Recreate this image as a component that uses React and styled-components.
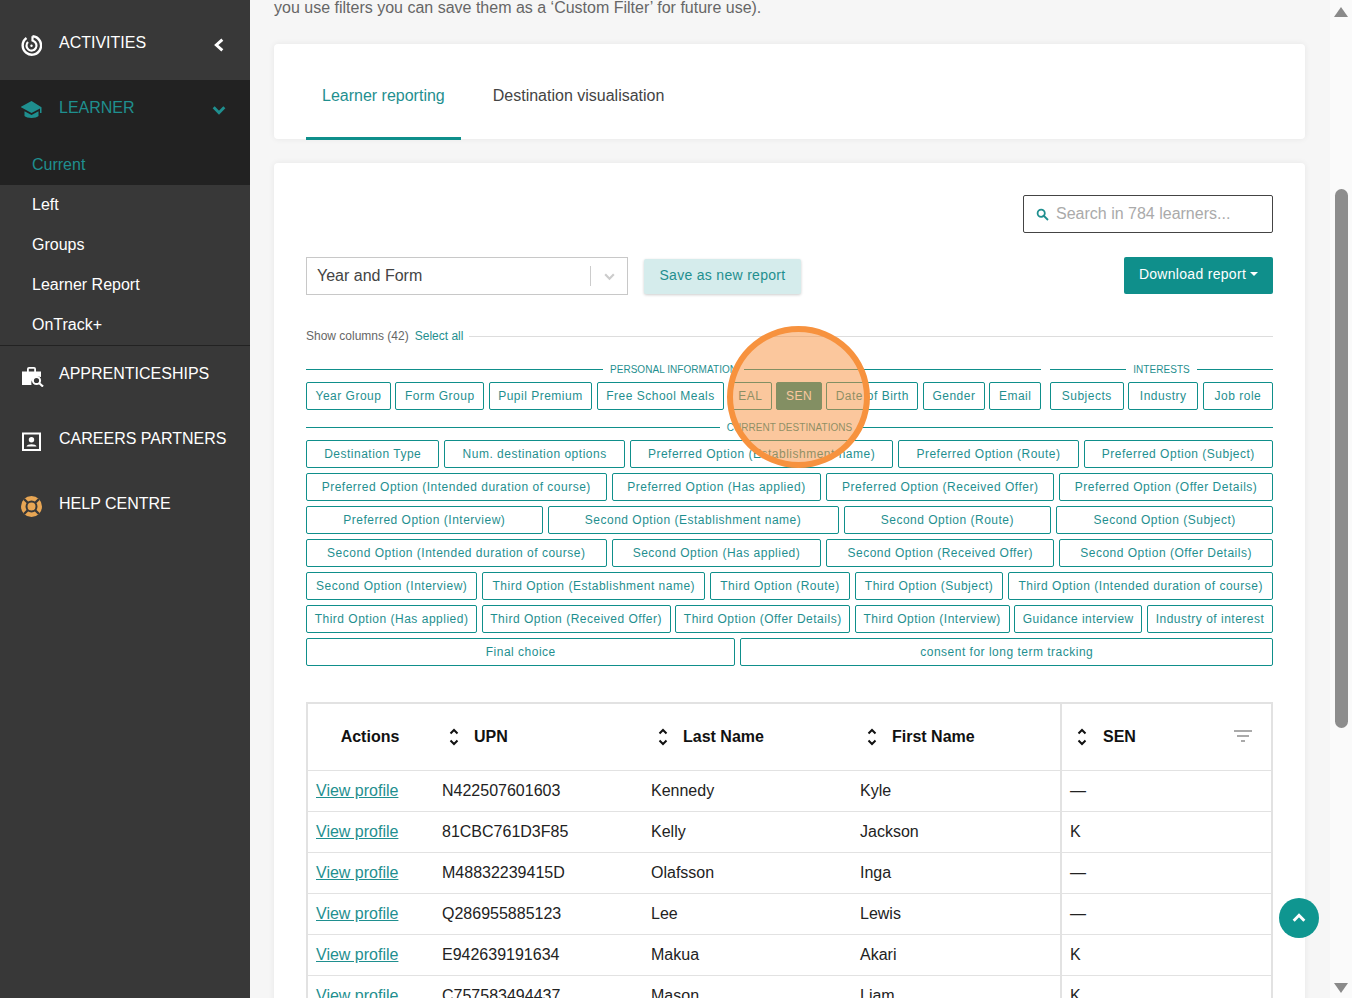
import React from 'react';
import styled, { createGlobalStyle } from 'styled-components';

const teal = '#0f8f8b';
const tealText = '#1f8f8f';

const GlobalStyle = createGlobalStyle`
  html, body {
    margin: 0;
    padding: 0;
    height: 100%;
    overflow: hidden;
  }
  body {
    font-family: 'Liberation Sans', Arial, sans-serif;
    color: #222;
  }
  * {
    box-sizing: border-box;
  }
`;

const Page = styled.div`
  position: relative;
  display: flex;
  width: 1352px;
  height: 998px;
  overflow: hidden;
`;

const Sidebar = styled.aside`
  flex: 0 0 250px;
  background: #383838;
  padding-top: 15px;
`;

const NavItem = styled.div`
  display: flex;
  align-items: flex-start;
  height: 65px;
  padding: 18px 0 0 21px;
  color: ${(p) => (p.$active ? tealText : '#fff')};
`;

const NavIcon = styled.span`
  flex: 0 0 21px;
  min-width: 0;
  height: 21px;
  margin-top: 2px;
  margin-right: 17px;
  svg {
    display: block;
  }
`;

const NavLabel = styled.span`
  flex: 1;
  font-size: 16px;
  line-height: 20px;
`;

const NavChevron = styled.span`
  flex: 0 0 39px;
  margin-top: 4px;
  svg {
    display: block;
  }
`;

const ActiveGroup = styled.div`
  background: #222;
  height: 105px;
`;

const CurrentLink = styled.div`
  padding-left: 32px;
  margin-top: 10px;
  line-height: 20px;
  font-size: 16px;
  color: ${tealText};
`;

const SubLink = styled.div`
  height: 40px;
  padding-left: 32px;
  font-size: 16px;
  line-height: 40px;
  color: #fff;
`;

const SubMenu = styled.div`
  height: 161px;
  border-bottom: 1px solid #222;
`;

const Main = styled.main`
  flex: 1;
  min-width: 0;
  background: #f6f6f6;
  padding: 0 25px 0 24px;
  overflow: hidden;
`;

const Intro = styled.p`
  margin: 0 0 28px;
  font-size: 16px;
  line-height: 16px;
  color: #666;
`;

const Card = styled.section`
  background: #fff;
  border-radius: 4px;
  box-shadow: 0 0 6px rgba(0, 0, 0, 0.07);
`;

const TabBar = styled(Card)`
  display: flex;
  height: 95px;
  padding-left: 32px;
  margin-bottom: 24px;
`;

const Tab = styled.div`
  height: 96px;
  padding: 0 16px;
  margin-right: ${(p) => (p.$active ? '16px' : '0')};
  font-size: 16px;
  line-height: 104px;
  color: ${(p) => (p.$active ? tealText : '#444')};
  border-bottom: 3px solid ${(p) => (p.$active ? teal : 'transparent')};
`;

const ReportCard = styled(Card)`
  padding: 32px 32px 0;
  height: 900px;
`;

const SearchRow = styled.div`
  display: flex;
  justify-content: flex-end;
  margin-bottom: 24px;
`;

const SearchBox = styled.label`
  display: flex;
  align-items: center;
  width: 250px;
  height: 38px;
  padding-left: 12px;
  border: 1px solid #444;
  border-radius: 2px;
`;

const SearchInput = styled.input`
  flex: 1;
  min-width: 0;
  margin-left: 5px;
  border: 0;
  outline: none;
  font-family: inherit;
  font-size: 16px;
  &::placeholder {
    color: #aaa;
    opacity: 1;
  }
`;

const ControlRow = styled.div`
  display: flex;
  align-items: flex-start;
  height: 38px;
`;

const SelectBox = styled.div`
  display: flex;
  align-items: center;
  width: 322px;
  height: 38px;
  padding: 0 11px 0 10px;
  border: 1px solid #c8c8c8;
  font-size: 16px;
  color: #444;
`;

const SelectValue = styled.span`
  flex: 1;
`;

const SelectDivider = styled.span`
  width: 1px;
  height: 20px;
  margin-right: 12px;
  background: #ccc;
`;

const SaveButton = styled.button`
  height: 35px;
  width: 157px;
  margin: 2px 0 0 16px;
  padding: 0 0 3px;
  border: 0;
  border-radius: 2px;
  background: #d5ecec;
  box-shadow: 0 1px 3px rgba(0, 0, 0, 0.2);
  color: ${tealText};
  font-family: inherit;
  font-size: 14px;
  letter-spacing: 0.3px;
`;

const DownloadButton = styled.button`
  display: flex;
  align-items: center;
  justify-content: center;
  gap: 4px;
  height: 37px;
  width: 149px;
  margin-left: auto;
  padding: 0 0 3px;
  border: 0;
  border-radius: 2px;
  background: ${teal};
  color: #fff;
  font-family: inherit;
  font-size: 14px;
  letter-spacing: 0.3px;
`;

const Caret = styled.span`
  width: 0;
  height: 0;
  border-left: 4px solid transparent;
  border-right: 4px solid transparent;
  border-top: 4px solid #fff;
`;

const ColumnsHeader = styled.div`
  display: flex;
  align-items: center;
  margin: 34px 0 19px;
  height: 14px;
  font-size: 12px;
  color: #666;
`;

const SelectAll = styled.a`
  margin: 0 6px;
  color: ${tealText};
`;

const GreyRule = styled.span`
  flex: 1;
  height: 1px;
  background: #ddd;
`;

const ChipGroups = styled.div`
  display: flex;
  gap: 9px;
  margin-bottom: 5px;
`;

const ChipGroup = styled.div`
  flex: ${(p) => (p.$fill ? 1 : '0 0 735px')};
  min-width: 0;
`;

const SectionTitle = styled.div`
  display: flex;
  align-items: center;
  gap: 7px;
  height: 14px;
  margin-bottom: 6px;
  font-size: 10px;
  letter-spacing: 0.05px;
  color: ${tealText};
  &::before,
  &::after {
    content: '';
    flex: 1;
    height: 1px;
    background: ${teal};
  }
`;

const ChipRow = styled.div`
  display: flex;
  gap: ${(p) => (p.$tight ? '4.5px' : '5px')};
  margin-bottom: 5px;
`;

const Chip = styled.button`
  flex: 1 1 auto;
  min-width: 0;
  height: 28px;
  padding: 0 ${(p) => (p.$tight ? '7.5px' : '9px')};
  border: 1px solid ${teal};
  border-radius: 2px;
  background: ${(p) => (p.$on ? teal : '#fff')};
  color: ${(p) => (p.$on ? '#fff' : tealText)};
  font-family: inherit;
  font-size: 12px;
  letter-spacing: 0.5px;
  white-space: nowrap;
`;

const TableFrame = styled.div`
  margin-top: 36px;
  border: 2px solid #e2e2e2;
  border-bottom: 0;
`;

const DataTable = styled.table`
  width: 100%;
  table-layout: fixed;
  border-collapse: collapse;
  font-size: 16px;
`;

const HeadCell = styled.th`
  height: 66px;
  padding: 0;
  text-align: ${(p) => (p.$center ? 'center' : 'left')};
  font-size: 16px;
  color: #111;
  border-bottom: 1px solid #e2e2e2;
  border-left: ${(p) => (p.$sticky ? '2px solid #e2e2e2' : '0')};
`;

const HeadInner = styled.div`
  display: flex;
  align-items: center;
  gap: ${(p) => (p.$sticky ? '16px' : '15px')};
  padding-left: ${(p) => (p.$sticky ? '15px' : '17px')};
  padding-right: 19px;
`;

const HeadText = styled.span`
  flex: 1;
`;

const Cell = styled.td`
  height: 41px;
  padding: 0 10px;
  color: #222;
  white-space: nowrap;
  border-bottom: 1px solid #e2e2e2;
  border-left: ${(p) => (p.$sticky ? '2px solid #e2e2e2' : '0')};
  padding-left: ${(p) => (p.$sticky ? '8px' : '10px')};
`;

const ProfileLink = styled.a`
  color: ${tealText};
  text-decoration: underline;
  margin-left: -2px;
`;

const ScrollBar = styled.div`
  flex: 0 0 22px;
  display: flex;
  flex-direction: column;
  align-items: center;
  background: #fafafa;
  padding: 7px 0 5px;
`;

const ArrowUp = styled.span`
  width: 0;
  height: 0;
  border-left: 7px solid transparent;
  border-right: 7px solid transparent;
  border-bottom: 10px solid #8a8a8a;
`;

const ArrowDown = styled(ArrowUp)`
  margin-top: auto;
  border-bottom: 0;
  border-top: 10px solid #8a8a8a;
`;

const Thumb = styled.span`
  width: 13px;
  height: 539px;
  margin-top: 172px;
  border-radius: 7px;
  background: #8d8d8d;
`;

const BackToTop = styled.button`
  position: absolute;
  left: 1279px;
  top: 898px;
  width: 40px;
  height: 40px;
  display: flex;
  align-items: center;
  justify-content: center;
  padding: 0;
  border: 0;
  border-radius: 50%;
  background: #0f9690;
`;

const Highlight = styled.div`
  position: absolute;
  left: 727px;
  top: 326px;
  width: 143px;
  height: 142px;
  border: 6px solid #f7923e;
  border-radius: 50%;
  background: rgba(247, 143, 59, 0.5);
`;

const Chevron = ({ dir, color = '#fff', size = 16, width = 2.2 }) => {
  const paths = {
    left: 'M8.5 2 L4 6 L8.5 10',
    down: 'M2 4 L6 8 L10 4',
    up: 'M2 8 L6 4 L10 8'
  };
  return (
    <svg width={size} height={size} viewBox="0 0 12 12" fill="none">
      <path d={paths[dir]} stroke={color} strokeWidth={width} />
    </svg>
  );
};

const ActivitiesIcon = () => (
  <svg width="21" height="21" viewBox="0 0 21 21" fill="none" stroke="#fff">
    <path d="M5.5 3 A9.2 9.2 0 1 0 11.5 1.3" strokeWidth="2.4" />
    <path d="M7 7 A5 5 0 1 0 12.5 6 L11.5 5.6 V1.3" strokeWidth="2.2" />
    <circle cx="10.5" cy="10.8" r="1.2" fill="#fff" strokeWidth="0" />
  </svg>
);

const CapIcon = () => (
  <svg width="23" height="21" viewBox="1 0 23 21" fill={tealText}>
    <path d="M11.5 1 L0.5 7 L11.5 13 L20 8.4 V13 H21.5 V7.2 Z" />
    <path d="M4.5 11.2 V16 C6.5 18.6 16.5 18.6 18.5 16 V11.2 L11.5 15 Z" />
  </svg>
);

const BriefcaseIcon = () => (
  <svg width="23" height="21" viewBox="0 0 23 21">
    <path
      d="M1 5.5 H6 V3 Q6 1 8 1 H13 Q15 1 15 3 V5.5 H20 V11 A7 7 0 0 0 10.5 19 H1 Z M7.8 5.5 H13.2 V2.8 H7.8 Z"
      fill="#fff"
      fillRule="evenodd"
    />
    <circle cx="15.5" cy="14.5" r="3.6" fill="none" stroke="#fff" strokeWidth="2" />
    <path d="M18 17 L22 20.5" stroke="#fff" strokeWidth="2.2" />
  </svg>
);

const PartnerIcon = () => (
  <svg width="21" height="21" viewBox="0 0 21 21">
    <rect x="2" y="2.5" width="17" height="16.5" fill="none" stroke="#fff" strokeWidth="2" />
    <circle cx="10.5" cy="8.7" r="2.7" fill="#fff" />
    <path d="M5.5 15.5 C6 12.6 15 12.6 15.5 15.5 Z" fill="#fff" />
  </svg>
);

const LifeRingIcon = () => (
  <svg width="21" height="21" viewBox="0 0 21 21" fill="none">
    <circle cx="10.5" cy="10.5" r="10.5" fill="#e8a654" />
    <circle cx="10.5" cy="10.5" r="5" stroke="#383838" strokeWidth="2" />
    <path
      d="M3 3 L7 7 M18 3 L14 7 M3 18 L7 14 M18 18 L14 14"
      stroke="#383838"
      strokeWidth="2.4"
    />
  </svg>
);

const SearchIcon = () => (
  <svg width="13" height="13" viewBox="0 0 13 13" fill="none" stroke={tealText} strokeWidth="1.8">
    <circle cx="5.2" cy="5.2" r="3.6" />
    <path d="M8 8 L12 12" />
  </svg>
);

const SortIcon = () => (
  <svg width="10" height="18" viewBox="0 0 10 18" fill="none" stroke="#111" strokeWidth="2">
    <path d="M1.5 5.5 L5 2 L8.5 5.5" />
    <path d="M1.5 12.5 L5 16 L8.5 12.5" />
  </svg>
);

const FilterIcon = () => (
  <svg width="18" height="13" viewBox="0 0 18 13" fill="#aaa">
    <rect x="0" y="0" width="18" height="2" />
    <rect x="3" y="5" width="12" height="2" />
    <rect x="7" y="10" width="4" height="2" />
  </svg>
);

const personalChips = [
  'Year Group',
  'Form Group',
  'Pupil Premium',
  'Free School Meals',
  'EAL',
  'SEN',
  'Date of Birth',
  'Gender',
  'Email'
];

const interestChips = ['Subjects', 'Industry', 'Job role'];

// the rows that hold too much for their width get the tighter chips
const destinationRows = [
  {
    labels: [
      'Destination Type',
      'Num. destination options',
      'Preferred Option (Establishment name)',
      'Preferred Option (Route)',
      'Preferred Option (Subject)'
    ]
  },
  {
    labels: [
      'Preferred Option (Intended duration of course)',
      'Preferred Option (Has applied)',
      'Preferred Option (Received Offer)',
      'Preferred Option (Offer Details)'
    ]
  },
  {
    labels: [
      'Preferred Option (Interview)',
      'Second Option (Establishment name)',
      'Second Option (Route)',
      'Second Option (Subject)'
    ]
  },
  {
    labels: [
      'Second Option (Intended duration of course)',
      'Second Option (Has applied)',
      'Second Option (Received Offer)',
      'Second Option (Offer Details)'
    ]
  },
  {
    labels: [
      'Second Option (Interview)',
      'Third Option (Establishment name)',
      'Third Option (Route)',
      'Third Option (Subject)',
      'Third Option (Intended duration of course)'
    ]
  },
  {
    tight: true,
    labels: [
      'Third Option (Has applied)',
      'Third Option (Received Offer)',
      'Third Option (Offer Details)',
      'Third Option (Interview)',
      'Guidance interview',
      'Industry of interest'
    ]
  },
  { labels: ['Final choice', 'consent for long term tracking'] }
];

const learners = [
  ['N422507601603', 'Kennedy', 'Kyle', '—'],
  ['81CBC761D3F85', 'Kelly', 'Jackson', 'K'],
  ['M48832239415D', 'Olafsson', 'Inga', '—'],
  ['Q286955885123', 'Lee', 'Lewis', '—'],
  ['E942639191634', 'Makua', 'Akari', 'K'],
  ['C757583494437', 'Mason', 'Liam', 'K']
];

export default function App() {
  return (
    <Page>
      <GlobalStyle />
      <Sidebar>
        <NavItem>
          <NavIcon><ActivitiesIcon /></NavIcon>
          <NavLabel>ACTIVITIES</NavLabel>
          <NavChevron><Chevron dir="left" /></NavChevron>
        </NavItem>
        <ActiveGroup>
          <NavItem $active>
            <NavIcon><CapIcon /></NavIcon>
            <NavLabel>LEARNER</NavLabel>
            <NavChevron><Chevron dir="down" color={tealText} /></NavChevron>
          </NavItem>
          <CurrentLink>Current</CurrentLink>
        </ActiveGroup>
        <SubMenu>
          <SubLink>Left</SubLink>
          <SubLink>Groups</SubLink>
          <SubLink>Learner Report</SubLink>
          <SubLink>OnTrack+</SubLink>
        </SubMenu>
        <NavItem>
          <NavIcon><BriefcaseIcon /></NavIcon>
          <NavLabel>APPRENTICESHIPS</NavLabel>
        </NavItem>
        <NavItem>
          <NavIcon><PartnerIcon /></NavIcon>
          <NavLabel>CAREERS PARTNERS</NavLabel>
        </NavItem>
        <NavItem>
          <NavIcon><LifeRingIcon /></NavIcon>
          <NavLabel>HELP CENTRE</NavLabel>
        </NavItem>
      </Sidebar>

      <Main>
        <Intro>you use filters you can save them as a ‘Custom Filter’ for future use).</Intro>
        <TabBar>
          <Tab $active>Learner reporting</Tab>
          <Tab>Destination visualisation</Tab>
        </TabBar>
        <ReportCard>
          <SearchRow>
            <SearchBox>
              <SearchIcon />
              <SearchInput placeholder="Search in 784 learners..." />
            </SearchBox>
          </SearchRow>
          <ControlRow>
            <SelectBox>
              <SelectValue>Year and Form</SelectValue>
              <SelectDivider />
              <Chevron dir="down" color="#ccc" size={13} width={2} />
            </SelectBox>
            <SaveButton>Save as new report</SaveButton>
            <DownloadButton>Download report<Caret /></DownloadButton>
          </ControlRow>

          <ColumnsHeader>
            Show columns (42)
            <SelectAll>Select all</SelectAll>
            <GreyRule />
          </ColumnsHeader>

          <ChipGroups>
            <ChipGroup>
              <SectionTitle>PERSONAL INFORMATION</SectionTitle>
              <ChipRow $tight>
                {personalChips.map((label) => (
                  <Chip key={label} $on={label === 'SEN'} $tight>{label}</Chip>
                ))}
              </ChipRow>
            </ChipGroup>
            <ChipGroup $fill>
              <SectionTitle>INTERESTS</SectionTitle>
              <ChipRow $tight>
                {interestChips.map((label) => (
                  <Chip key={label} $tight>{label}</Chip>
                ))}
              </ChipRow>
            </ChipGroup>
          </ChipGroups>

          <SectionTitle>CURRENT DESTINATIONS</SectionTitle>
          {destinationRows.map((row) => (
            <ChipRow key={row.labels[0]} $tight={row.tight}>
              {row.labels.map((label) => (
                <Chip key={label} $tight={row.tight}>{label}</Chip>
              ))}
            </ChipRow>
          ))}

          <TableFrame>
            <DataTable>
              <colgroup>
                <col style={{ width: 124 }} />
                <col style={{ width: 209 }} />
                <col style={{ width: 209 }} />
                <col style={{ width: 211 }} />
                <col />
              </colgroup>
              <thead>
                <tr>
                  <HeadCell $center>Actions</HeadCell>
                  {['UPN', 'Last Name', 'First Name'].map((name) => (
                    <HeadCell key={name}>
                      <HeadInner>
                        <SortIcon />
                        <HeadText>{name}</HeadText>
                      </HeadInner>
                    </HeadCell>
                  ))}
                  <HeadCell $sticky>
                    <HeadInner $sticky>
                      <SortIcon />
                      <HeadText>SEN</HeadText>
                      <FilterIcon />
                    </HeadInner>
                  </HeadCell>
                </tr>
              </thead>
              <tbody>
                {learners.map((row) => (
                  <tr key={row[0]}>
                    <Cell><ProfileLink>View profile</ProfileLink></Cell>
                    <Cell>{row[0]}</Cell>
                    <Cell>{row[1]}</Cell>
                    <Cell>{row[2]}</Cell>
                    <Cell $sticky>{row[3]}</Cell>
                  </tr>
                ))}
              </tbody>
            </DataTable>
          </TableFrame>
        </ReportCard>
      </Main>

      <ScrollBar>
        <ArrowUp />
        <Thumb />
        <ArrowDown />
      </ScrollBar>

      <Highlight />
      <BackToTop><Chevron dir="up" /></BackToTop>
    </Page>
  );
}
